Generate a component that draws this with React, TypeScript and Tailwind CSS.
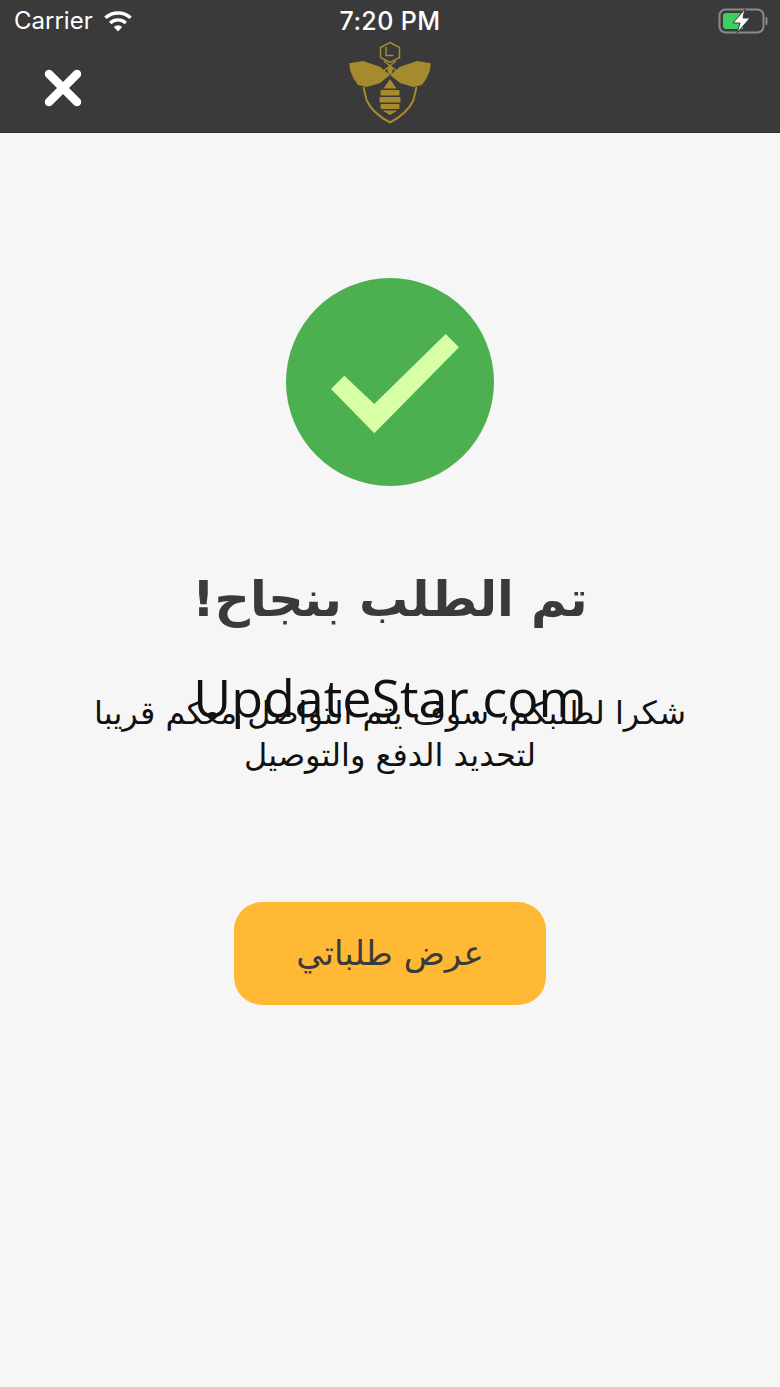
import React from "react";

function Wifi() {
  return (
    <svg width="32" height="24" viewBox="0 0 32 24" className="block">
      <path d="M16 22.500l-4.200-4.600a6.200 6.200 0 0 1 8.400 0z" fill="#fff" />
      <path d="M9.300 15.200a9.900 9.900 0 0 1 13.400 0l2.300-2.500a13.400 13.400 0 0 0-18 0z" fill="#fff" />
      <path d="M4.600 10.100a16.900 16.900 0 0 1 22.800 0l2.400-2.600a20.500 20.500 0 0 0-27.600 0z" fill="#fff" />
    </svg>
  );
}

function Battery() {
  return (
    <svg width="50" height="26" viewBox="0 0 50 26" className="block">
      <rect x="1.500" y="1.500" width="44" height="23" rx="6" fill="none" stroke="#8a8a8a" strokeWidth="2" />
      <rect x="47.500" y="9" width="2" height="8" rx="1" fill="#8a8a8a" />
      <path d="M5 8a3 3 0 0 1 3-3h17v16H8a3 3 0 0 1-3-3z" fill="#3ccf5d" />
      <path d="M27 1L15 15h7l-3 10 13-15h-7z" fill="#fff" stroke="#3a3a3a" strokeWidth="1" />
    </svg>
  );
}

function Bee() {
  return (
    <svg width="90" height="90" viewBox="0 0 90 90" className="block">
      <g fill="none" stroke="#a68a2e" strokeWidth="1.500">
        <path d="M45 4.500l9.500 5v10L45 24.500l-9.500-5v-10z" />
        <path d="M41 9v8.500h7.500" />
        <path d="M39 23l14 11M51 23L37 34" />
        <path d="M18.500 49l3 13c4 9 13 17 23.500 22.500C55.500 79 64.500 71 68.500 62l3-13" strokeWidth="2" />
      </g>
      <path d="M45 37L35 28.700 18 23 4.300 25.300 5 32l3.300 8 4.700 7 8.700 2L35 45z" fill="#a68a2e" />
      <path d="M45 37l10-8.300L72 23l13.700 2.300L85 32l-3.300 8-4.700 7-8.700 2L55 45z" fill="#a68a2e" />
      <path d="M45 27l3 4-1.500 5h-3l-1.500-5z" fill="#a68a2e" />
      <g fill="#a68a2e">
        <path d="M38.500 50.500L45 41l6.500 9.500z" />
        <rect x="35.500" y="52" width="19" height="5.500" rx="1" />
        <rect x="34.500" y="59" width="21" height="5.500" rx="1" />
        <rect x="35.500" y="66" width="19" height="5" rx="1" />
        <path d="M37.500 72.500h15L45 77z" />
      </g>
    </svg>
  );
}

export default function App() {
  return (
    <div className="relative flex h-[1387px] w-[780px] flex-col overflow-hidden bg-[#f6f6f6] font-['Noto_Sans','DejaVu_Sans',sans-serif]">
      <header className="relative h-[133px] shrink-0 border-b border-[#2f2f2f] bg-[#3a3a3a]">
        <div className="flex h-[42px] items-center justify-between pl-[14px] pr-[12px] text-white">
          <div className="flex items-center gap-[9px]">
            <span className="font-['Inter',sans-serif] text-[24px] leading-none">Carrier</span>
            <Wifi />
          </div>
          <Battery />
        </div>
        <span className="absolute left-0 right-0 top-[7px] text-center font-['Inter',sans-serif] text-[25px] font-medium leading-[28px] tracking-[0.4px] text-white">7:20 PM</span>
        <svg width="38" height="38" viewBox="0 0 38 38" className="absolute left-[44px] top-[69px]">
          <path d="M5 5l28 28M33 5L5 33" stroke="#fff" strokeWidth="8.500" strokeLinecap="round" fill="none" />
        </svg>
        <div className="absolute left-[345px] top-[38px]">
          <Bee />
        </div>
      </header>

      <main className="flex flex-col items-center pt-[145px]">
        <svg width="208" height="208" viewBox="0 0 208 208" className="block">
          <circle cx="104" cy="104" r="104" fill="#4caf50" />
          <path d="M45 111l13.300-13.300 30 28.300 71.400-70 13.300 13.300-84.700 86z" fill="#d7ffa6" />
        </svg>
        <h1 dir="rtl" className="mt-[82px] text-center font-['DejaVu_Sans',sans-serif] text-[49px] font-bold leading-[64px] text-[#3a3a3a]">تم الطلب بنجاح!</h1>
        <p dir="rtl" className="mt-[60px] w-[640px] text-center font-['DejaVu_Sans',sans-serif] text-[32px] leading-[42px] text-[#111]">شكرا لطلبكم، سوف يتم التواصل معكم قريبا لتحديد الدفع والتوصيل</p>
        <button dir="rtl" className="mt-[126px] flex h-[103px] w-[312px] items-center justify-center rounded-[28px] bg-[#ffb833] font-['DejaVu_Sans',sans-serif] text-[34px] text-[#3a3a3a]">عرض طلباتي</button>
      </main>

      <span className="absolute left-0 right-0 top-[664px] text-center font-['Open_Sans',sans-serif] text-[52px] leading-[66px] text-[#111]">UpdateStar.com</span>
    </div>
  );
}
